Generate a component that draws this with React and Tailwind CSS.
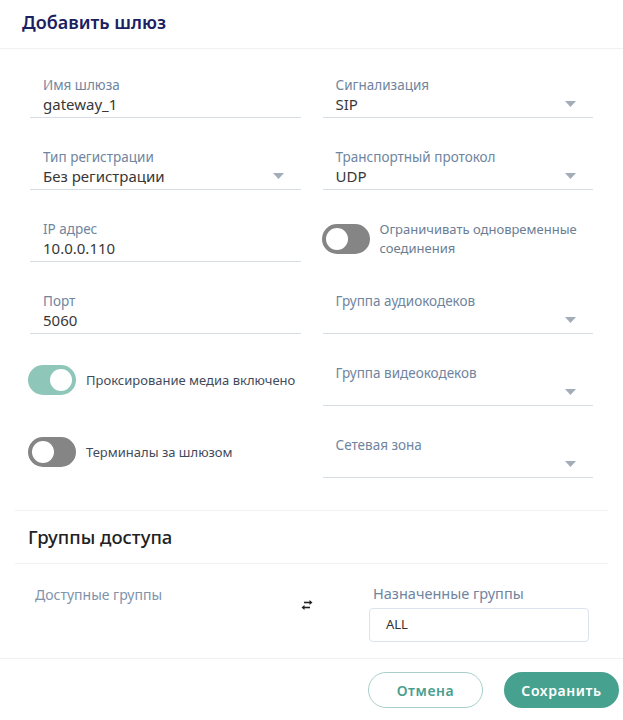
import React from "react";

const Caret = () => (
  <svg width="11" height="6" viewBox="0 0 11 6" className="shrink-0">
    <path d="M0 0h11L5.5 6z" fill="#a3adba" />
  </svg>
);

function Field({ label, value, select }) {
  return (
    <div className="flex flex-col h-[42px] pl-[13px] pr-[17px] pb-[3px] border-b border-[#d8dee6]">
      <span className="text-[13.5px] leading-[18px] text-[#6f85a0]">{label}</span>
      <div className="flex items-center justify-between h-[20px]">
        <span className="text-[15px] leading-[20px] text-[#383838]">{value}</span>
        {select && <Caret />}
      </div>
    </div>
  );
}

function Toggle({ on, children, muted }) {
  return (
    <div className="flex items-center gap-[10px]">
      <div
        className={`relative w-[48px] h-[30px] rounded-full shrink-0 ${
          on ? "bg-[#8ec6ba]" : "bg-[#858585]"
        }`}
      >
        <span
          className={`absolute top-[4px] w-[22px] h-[22px] rounded-full bg-white ${
            on ? "right-[4px]" : "left-[4px]"
          }`}
        />
      </div>
      <span
        className={`text-[13px] leading-[19px] whitespace-nowrap ${
          muted ? "text-[#6a7d94]" : "text-[#3f4b5c]"
        }`}
      >
        {children}
      </span>
    </div>
  );
}

const SwapIcon = () => (
  <svg width="14" height="12" viewBox="0 0 14 12">
    <path d="M4 3.5h7" stroke="#222" strokeWidth="1.6" />
    <path d="M9.5 1v5l3-2.5z" fill="#222" />
    <path d="M10 8.5H3" stroke="#222" strokeWidth="1.6" />
    <path d="M4.5 6v5l-3-2.5z" fill="#222" />
  </svg>
);

export default function App() {
  return (
    <div className="w-[623px] h-[720px] bg-white font-['Noto_Sans',sans-serif] flex flex-col">
      {/* Header */}
      <div className="h-[49px] border-b border-[#eff1f3] px-[22px] flex items-center pb-[4px]">
        <h1 className="text-[18px] font-semibold text-[#1b2160]">Добавить шлюз</h1>
      </div>

      {/* Gateway form */}
      <div className="grid grid-cols-2 gap-x-[22px] gap-y-[30px] px-[30px] pt-[27px]">
        <Field label="Имя шлюза" value="gateway_1" />
        <Field label="Сигнализация" value="SIP" select />

        <Field label="Тип регистрации" value="Без регистрации" select />
        <Field label="Транспортный протокол" value="UDP" select />

        <Field label="IP адрес" value="10.0.0.110" />
        <div className="h-[42px] flex items-center -ml-[1px] pb-[5px]">
          <Toggle muted>
            Ограничивать одновременные
            <br />
            соединения
          </Toggle>
        </div>

        <Field label="Порт" value="5060" />
        <Field label="Группа аудиокодеков" value="" select />

        <div className="h-[42px] pt-[1px] -ml-[2px]">
          <Toggle on>Проксирование медиа включено</Toggle>
        </div>
        <Field label="Группа видеокодеков" value="" select />

        <div className="h-[42px] pt-[1px] -ml-[2px]">
          <Toggle>Терминалы за шлюзом</Toggle>
        </div>
        <Field label="Сетевая зона" value="" select />
      </div>

      {/* Access groups */}
      <div className="mx-[15px] mt-[32px] border-t border-[#eff1f3]">
        <div className="h-[53px] flex items-center px-[13px] border-b border-[#eff1f3]">
          <h2 className="text-[18.5px] font-medium text-[#222]">Группы доступа</h2>
        </div>
        <div className="flex pt-[20px] h-[94px]">
          <div className="w-[270px] pl-[20px] text-[14px] text-[#7f93ab]">Доступные группы</div>
          <div className="w-[84px] pt-[15px] pl-[15px]">
            <SwapIcon />
          </div>
          <div className="flex flex-col">
            <span className="pl-[4px] text-[14.5px] leading-[18px] text-[#6f85a0]">Назначенные группы</span>
            <div className="mt-[6px] w-[220px] h-[34px] border border-[#dbe4ee] rounded-[4px] flex items-center px-[16px] text-[13px] text-[#333]">
              ALL
            </div>
          </div>
        </div>
      </div>

      {/* Footer actions */}
      <div className="border-t border-[#eff1f3] flex justify-end gap-[21px] px-[4px] pt-[13px]">
        <button className="w-[115px] h-[36px] rounded-full border border-[#a8cfca] text-[#4a9e8e] text-[14px] font-semibold tracking-[0.6px]">
          Отмена
        </button>
        <button className="w-[115px] h-[36px] rounded-full bg-[#46a28f] text-white text-[14px] font-semibold tracking-[0.6px]">
          Сохранить
        </button>
      </div>
    </div>
  );
}
